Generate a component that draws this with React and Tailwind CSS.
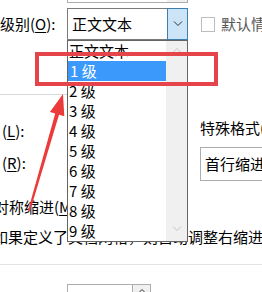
import React from 'react';

const levels = ['正文文本', '1 级', '2 级', '3 级', '4 级', '5 级', '6 级', '7 级', '8 级', '9 级'];

function Chevron({ up = false, className = '' }) {
  return (
    <svg width="10" height="6" viewBox="0 0 10 6" className={className}>
      <path
        d={up ? 'M1 5.5 L5 1.5 L9 5.5' : 'M1 0.5 L5 4.5 L9 0.5'}
        fill="none"
        stroke="currentColor"
        strokeWidth="1"
      />
    </svg>
  );
}

function LevelList() {
  return (
    <div className="absolute left-[67px] top-[40px] w-[121px] h-[202px] flex border border-[#646464] bg-white">
      <div className="w-[98px] shrink-0 flex flex-col">
        {levels.map((lv, i) => (
          <div
            key={lv}
            className={
              i === 1
                ? 'h-[20px] leading-[20px] pl-[2px] whitespace-nowrap bg-[#3b99fc] text-white'
                : 'h-[20px] leading-[20px] pl-[1px] whitespace-nowrap text-black'
            }
          >
            {lv}
          </div>
        ))}
      </div>
      <div className="flex-1 bg-[#f0f0f0] flex flex-col items-center justify-between pt-[6px] pb-[9px] text-[#c4c4c4]">
        <Chevron up />
        <Chevron />
      </div>
    </div>
  );
}

export default function App() {
  return (
    <div className="relative w-[262px] h-[292px] overflow-hidden bg-white text-[15px] text-black font-['Noto_Sans_CJK_SC','Noto_Sans',sans-serif]">
      {/* bottom of the combo above */}
      <div className="ml-[67px] w-[121px] h-[3px] border-x border-b border-[#adadad] flex justify-end">
        <div className="w-[20px] bg-[#f0f0f0]" />
      </div>

      {/* level row */}
      <div className="mt-[5px] h-[32px] flex items-center">
        <div className="w-[67px] shrink-0 leading-[20px] whitespace-nowrap">
          级别(<span className="underline underline-offset-2">O</span>):
        </div>
        <div className="w-[121px] h-[32px] shrink-0 flex border border-[#7a7a7a] bg-white">
          <div className="flex-1 pl-[4px] leading-[30px] whitespace-nowrap overflow-hidden">正文文本</div>
          <div className="w-[21px] shrink-0 -my-px -mr-px flex items-center justify-center bg-[#cce4f7] border border-[#3c7fb1] text-[#333]">
            <Chevron />
          </div>
        </div>
        <div className="ml-[13px] w-[14px] h-[15px] shrink-0 border border-[#bdbdbd] bg-white" />
        <div className="ml-[6px] shrink-0 whitespace-nowrap text-[#555]">默认情况下折叠</div>
      </div>

      <div className="mt-[54px] w-[188px] h-px bg-[#d8d8d8]" />

      {/* indentation */}
      <div className="flex">
        <div className="w-[200px] shrink-0 flex flex-col">
          <div className="mt-[26px] h-[20px] leading-[20px] pl-[2px] whitespace-nowrap">
            (<span className="underline underline-offset-2">L</span>):
          </div>
          <div className="mt-[12px] h-[20px] leading-[20px] pl-[2px] whitespace-nowrap">
            (<span className="underline underline-offset-2">R</span>):
          </div>
        </div>
        <div className="shrink-0 flex flex-col">
          <div className="mt-[23px] h-[20px] leading-[20px] whitespace-nowrap">特殊格式(S):</div>
          <div className="mt-[9px] w-[80px] h-[34px] border border-[#adadad] pl-[4px] leading-[32px] whitespace-nowrap">
            首行缩进
          </div>
        </div>
      </div>

      <div className="mt-[16px] h-[20px] leading-[20px] -ml-[6px] whitespace-nowrap">
        对称缩进(<span className="underline underline-offset-2">M</span>)
      </div>
      <div className="mt-[10px] h-[20px] leading-[20px] -ml-[7px] whitespace-nowrap">
        如果定义了文档网格，则自动调整右缩进(D)
      </div>

      <div className="mt-[17px] w-full h-px bg-[#e3e3e3]" />

      {/* spin box below */}
      <div className="mt-[19px] ml-[67px] w-[84px] h-[12px] flex border border-[#adadad] overflow-hidden">
        <div className="flex-1 pl-[16px] leading-[28px] whitespace-nowrap">1 级</div>
        <div className="w-[18px] shrink-0 border-l border-[#adadad] bg-[#f0f0f0] flex justify-center pt-[3px] text-[#333]">
          <Chevron up />
        </div>
      </div>

      <LevelList />

      {/* highlight box */}
      <div className="absolute left-[35px] top-[52px] w-[183px] h-[34px] border-4 border-[#e5454a]" />

      {/* red arrow */}
      <svg className="absolute inset-0 pointer-events-none" width="262" height="292" viewBox="0 0 262 292">
        <polygon
          points="63,94 64.3,116.3 59,114.8 30,211.3 28,210.7 55.2,113.6 49.9,112.1"
          fill="#ec3b3b"
        />
      </svg>
    </div>
  );
}
